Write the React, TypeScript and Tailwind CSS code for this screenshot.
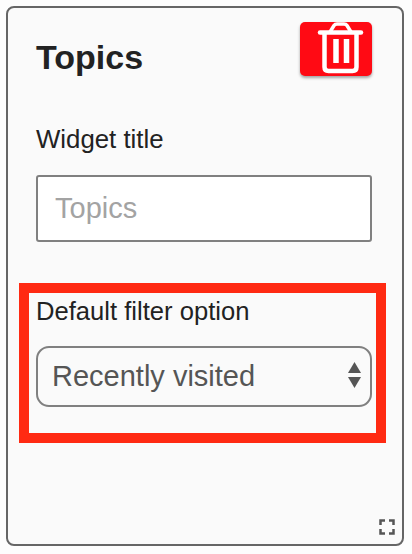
export default function App() {
  return (
    <div className="w-[412px] h-[554px] bg-[#fdfdfd] pt-[6px] pl-[6px] font-['Liberation_Sans',Arial,sans-serif]">
      <div className="relative w-[398px] h-[540px] border-2 border-[#666666] rounded-lg bg-[#fafafa] pt-[14px] px-[28px]">
        <div className="flex justify-between items-start">
          <h2 className="mt-[15px] text-[34px] leading-[40px] font-bold text-[#222222]">Topics</h2>
          <button className="mr-[2px] w-[72px] h-[54px] rounded-[5px] bg-[#ff0a14] shadow-[0_2px_3px_rgba(0,0,0,0.35)]">
            <svg width="72" height="54" viewBox="0 0 72 54" fill="none" stroke="white" strokeWidth="4.5" className="block">
              <path d="M20 10.5H61" strokeLinecap="round" />
              <path d="M24.5 11V45Q24.5 49 28.5 49H52.5Q56.5 49 56.5 45V11" />
              <path d="M30 10L34 3.5Q35 2 37 2H44Q46 2 47 3.5L51 10" strokeWidth="3.5" />
              <path d="M36 17V41M46.5 17V41" strokeWidth="5.5" />
            </svg>
          </button>
        </div>
        <label className="block mt-[47px] text-[25.8px] leading-[30px] text-[#222222]">Widget title</label>
        <input
          placeholder="Topics"
          className="block mt-[21px] w-[336px] h-[67px] bg-white border-2 border-[#808080] rounded-[3px] px-[17px] text-[29px] placeholder:text-[#a3a3a3] outline-none"
        />
        <div className="-ml-[17px] mt-[41px] w-[367px] h-[160px] border-[10px] border-[#ff2a12] pl-[7px] pt-[3px]">
          <div className="text-[25.6px] leading-[30px] text-[#222222]">Default filter option</div>
          <div className="mt-[20px] w-[336px] h-[61px] border-2 border-[#808080] rounded-[13px] flex items-center justify-between pl-[14px] pr-[9px] text-[29px] text-[#555555]">
            <span>Recently visited</span>
            <svg width="13" height="26" viewBox="0 0 13 26" fill="#555555" className="-mt-[3px]">
              <path d="M6.5 0L13 11H0Z" />
              <path d="M0 15H13L6.5 26Z" />
            </svg>
          </div>
        </div>
        <svg width="16" height="16" viewBox="0 0 16 16" fill="none" stroke="#555555" strokeWidth="2.5" className="absolute right-[7px] bottom-[9px]">
          <path d="M1.5 6V1.5H6M10 1.5H14.5V6M14.5 10V14.5H10M6 14.5H1.5V10" />
        </svg>
      </div>
    </div>
  );
}
